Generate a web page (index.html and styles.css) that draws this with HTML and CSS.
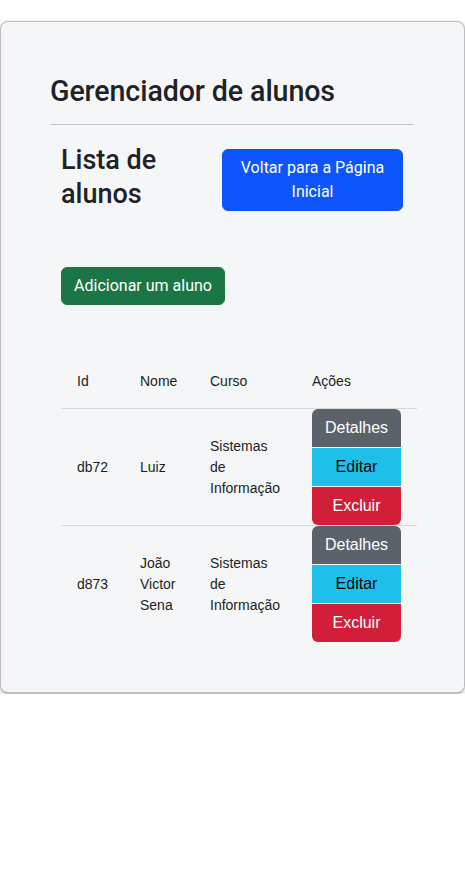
FILE: index.html
```html
<!DOCTYPE html>
<html lang="pt-BR">
<head>
<meta charset="utf-8">
<title>Gerenciador de alunos</title>
<link rel="stylesheet" href="styles.css">
</head>
<body>
<div class="card">
  <h1 class="title">Gerenciador de alunos</h1>
  <hr class="divider">
  <div class="section">
    <div class="section-head">
      <h2 class="subtitle">Lista de alunos</h2>
      <a class="btn btn-primary btn-back" href="#">Voltar para a Página Inicial</a>
    </div>
    <a class="btn btn-success btn-add" href="#">Adicionar um aluno</a>
    <table class="table">
      <colgroup>
        <col class="c-id"><col class="c-nome"><col class="c-curso"><col class="c-acoes">
      </colgroup>
      <thead>
        <tr><th>Id</th><th>Nome</th><th>Curso</th><th>Ações</th></tr>
      </thead>
      <tbody>
        <tr>
          <td>db72</td>
          <td>Luiz</td>
          <td>Sistemas de Informação</td>
          <td class="actions">
            <div class="btn-group">
              <a class="gbtn g-secondary" href="#">Detalhes</a>
              <a class="gbtn g-info" href="#">Editar</a>
              <a class="gbtn g-danger" href="#">Excluir</a>
            </div>
          </td>
        </tr>
        <tr>
          <td>d873</td>
          <td>João Victor Sena</td>
          <td>Sistemas de Informação</td>
          <td class="actions">
            <div class="btn-group">
              <a class="gbtn g-secondary" href="#">Detalhes</a>
              <a class="gbtn g-info" href="#">Editar</a>
              <a class="gbtn g-danger" href="#">Excluir</a>
            </div>
          </td>
        </tr>
      </tbody>
    </table>
  </div>
</div>
</body>
</html>
```
FILE: styles.css
```css
* { box-sizing: border-box; }

html, body {
  margin: 0;
  padding: 0;
  background: #ffffff;
}

body {
  font-family: Roboto, "Liberation Sans", Arial, sans-serif;
  color: #212529;
}

.card {
  width: 465px;
  margin-top: 21px;
  background: #f5f6f8;
  border: 1px solid #bdbdbf;
  border-bottom-width: 2px;
  border-radius: 8px;
  box-shadow: 0 2px 6px rgba(0, 0, 0, 0.18);
  padding: 52px 50px 50px 49px;
}

.title {
  margin: 0;
  font-size: 28.6px;
  font-weight: 500;
  line-height: 35px;
  letter-spacing: -0.1px;
  color: #1f2226;
}

.divider {
  margin: 15px 0 0 0;
  border: 0;
  border-top: 1px solid #c3c4c6;
  height: 0;
}

.section {
  padding: 0 11px;
}

.section-head {
  display: flex;
  justify-content: space-between;
  align-items: flex-start;
  margin-top: 18px;
}

.subtitle {
  margin: 0;
  width: 150px;
  font-size: 27px;
  font-weight: 500;
  line-height: 34px;
  color: #1f2226;
}

.btn {
  display: inline-block;
  font-family: Roboto, "Liberation Sans", Arial, sans-serif;
  font-size: 16px;
  line-height: 24px;
  padding: 6px 12px;
  border: 1px solid transparent;
  border-radius: 6px;
  color: #ffffff;
  text-decoration: none;
  text-align: center;
}

.btn-primary {
  background: #0f55fd;
  border-color: #0f55fd;
}

.btn-back {
  width: 181px;
  margin-top: 6px;
}

.btn-success {
  background: #1b7645;
  border-color: #1b7645;
}

.btn-add {
  width: 164px;
  margin-top: 56px;
}

.table {
  margin-top: 50px;
  width: 356px;
  table-layout: fixed;
  border-collapse: collapse;
  font-family: "Liberation Sans", Arial, sans-serif;
  font-size: 14px;
  line-height: 21px;
  color: #1d1f22;
}

.c-id { width: 63px; }
.c-nome { width: 70px; }
.c-curso { width: 102px; }
.c-acoes { width: 121px; }

.table th {
  font-weight: 400;
  text-align: left;
  padding: 16px 16px;
  border-bottom: 1px solid #d6d7da;
}

.table td {
  padding: 0 16px;
  vertical-align: middle;
  border-bottom: 1px solid #d6d7da;
}

.table tbody tr:last-child td {
  border-bottom: 0;
}

.btn-group {
  display: flex;
  flex-direction: column;
  gap: 1px;
}

.gbtn {
  display: block;
  height: 38px;
  padding: 7px 0;
  font-size: 16px;
  line-height: 24px;
  text-align: center;
  text-decoration: none;
  color: #ffffff;
}

.gbtn:first-child {
  border-radius: 6px 6px 0 0;
}

.gbtn:last-child {
  border-radius: 0 0 6px 6px;
}

.g-secondary { background: #5b6269; }
.g-info { background: #1ec0ea; color: #000000; }
.g-danger { background: #d11f3a; }
```
